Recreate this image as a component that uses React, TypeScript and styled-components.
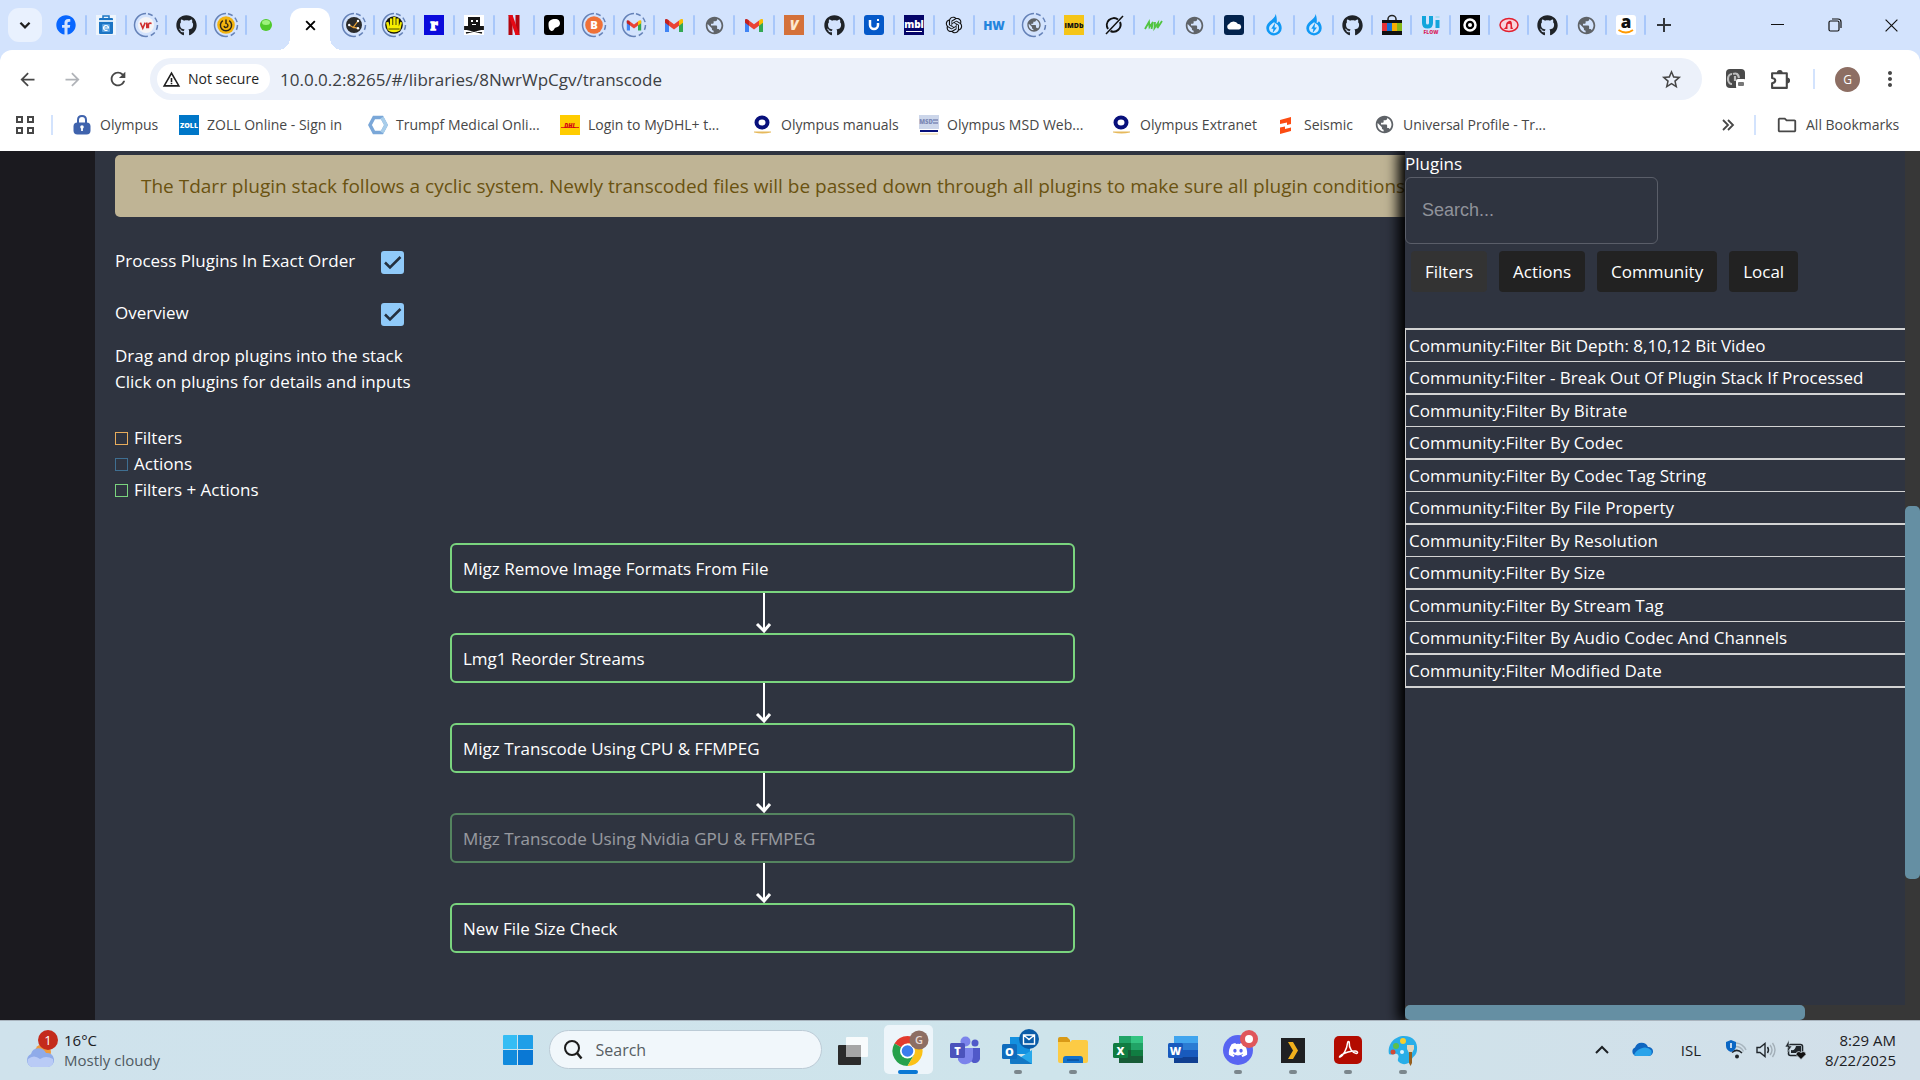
import React from "react";
import styled, { createGlobalStyle, css } from "styled-components";
import { FaFacebook, FaGithub, FaDiscord } from "react-icons/fa";
import { RiOpenaiFill } from "react-icons/ri";
import {
  MdPublic,
  MdArrowBack,
  MdArrowForward,
  MdRefresh,
  MdStarBorder,
  MdMoreVert,
  MdOutlineFolder,
  MdWarningAmber,
} from "react-icons/md";

const ui = `"Open Sans", "Noto Sans", sans-serif`;

const GlobalStyle = createGlobalStyle`
  * { box-sizing: border-box; }
  body { margin: 0; font-family: ${ui}; overflow: hidden; }
  button, input { font-family: inherit; font-size: inherit; }
  button { border: 0; padding: 0; background: none; color: inherit; cursor: pointer; }
  svg { display: block; flex: none; overflow: visible; }
  ul { list-style: none; margin: 0; padding: 0; }
  p { margin: 0; }
`;

const Screen = styled.div`
  display: flex;
  flex-direction: column;
  height: 100vh;
  background: #2f3440;
`;

/* ---------- browser chrome ---------- */

const TabStrip = styled.header`
  display: flex;
  align-items: center;
  height: 50px;
  flex: none;
  padding-left: 8px;
  background: #d3e3fd;
`;

const TabSearch = styled.button`
  display: grid;
  place-items: center;
  width: 34px;
  height: 34px;
  margin-right: 4px;
  border-radius: 11px;
  background: #e9f1fe;
  color: #1f1f1f;
`;

const Tab = styled.button<{ $narrow?: boolean; $last?: boolean }>`
  position: relative;
  display: grid;
  place-items: center;
  flex: none;
  width: ${(p) => (p.$narrow ? 39 : 40)}px;
  height: 34px;
  &::after {
    content: "";
    position: absolute;
    right: -1px;
    top: 7px;
    width: 2px;
    height: 20px;
    border-radius: 1px;
    background: ${(p) => (p.$last ? "transparent" : "#a8c7fa")};
  }
`;

const ActiveTab = styled.div`
  position: relative;
  display: grid;
  place-items: center;
  align-self: flex-end;
  width: 40px;
  height: 42px;
  margin: 0 4px;
  padding-bottom: 8px;
  border-radius: 12px 12px 0 0;
  background: #fff;
  &::before,
  &::after {
    content: "";
    position: absolute;
    bottom: 0;
    width: 12px;
    height: 12px;
  }
  &::before {
    right: 100%;
    background: radial-gradient(circle at 0 0, transparent 12px, #fff 12px);
  }
  &::after {
    left: 100%;
    background: radial-gradient(circle at 100% 0, transparent 12px, #fff 12px);
  }
`;

const NewTab = styled.button`
  display: grid;
  place-items: center;
  width: 38px;
  height: 34px;
  color: #33373d;
`;

const WindowControls = styled.div`
  display: flex;
  margin-left: auto;
`;

const WindowButton = styled.button`
  display: grid;
  place-items: center;
  width: 57px;
  height: 50px;
  color: #111;
`;

const ToolbarBack = styled.div`
  flex: none;
  background: #d3e3fd;
`;

const Toolbar = styled.div`
  display: flex;
  align-items: center;
  height: 58px;
  padding-left: 12px;
  border-radius: 12px 12px 0 0;
  background: #fff;
  color: #474747;
`;

const ToolButton = styled.button<{ $w?: number; $dim?: boolean }>`
  display: grid;
  place-items: center;
  flex: none;
  width: ${(p) => p.$w ?? 45}px;
  height: 36px;
  color: ${(p) => (p.$dim ? "#b0b3b8" : "#474747")};
`;

const AddressBar = styled.div`
  display: flex;
  align-items: center;
  flex: 1;
  height: 42px;
  margin: 0 11px 0 15px;
  padding: 0 8px 0 7px;
  border-radius: 21px;
  background: #ecf1fa;
`;

const Security = styled.button`
  display: flex;
  align-items: center;
  gap: 7px;
  flex: none;
  width: 113px;
  height: 30px;
  padding-left: 5px;
  border-radius: 15px;
  background: #fff;
  color: #1f1f1f;
  font-size: 14px;
  font-weight: 500;
  line-height: 20px;
  white-space: nowrap;
`;

const UrlInput = styled.input`
  flex: 1;
  min-width: 0;
  padding: 0 0 0 10px;
  border: 0;
  outline: 0;
  background: transparent;
  color: #3c4043;
  font-size: 17px;
`;

const ToolDivider = styled.span<{ $m?: number }>`
  flex: none;
  width: 2px;
  height: 20px;
  margin: 0 ${(p) => p.$m ?? 0}px;
  background: #d3e3fd;
`;

const Avatar = styled.button`
  display: grid;
  place-items: center;
  flex: none;
  width: 25px;
  height: 25px;
  margin-left: 10px;
  border-radius: 50%;
  background: #8d6e63;
  color: #fff;
  font-size: 12px;
`;

const Bookmarks = styled.nav`
  display: flex;
  align-items: center;
  height: 43px;
  flex: none;
  padding: 0 18px 10px 16px;
  background: #fff;
  color: #474747;
`;

const BookmarkLink = styled.a<{ $w: number }>`
  display: flex;
  align-items: center;
  gap: 8px;
  flex: none;
  width: ${(p) => p.$w}px;
  color: #474747;
  font-size: 14px;
  line-height: 20px;
  text-decoration: none;
  white-space: nowrap;
`;

const BookmarkEnd = styled.div`
  display: flex;
  align-items: center;
  gap: 20px;
  margin-left: auto;
`;

/* ---------- page ---------- */

const Page = styled.div`
  display: flex;
  flex: 1;
  min-height: 0;
  overflow: hidden;
  color: #fff;
  font-size: 17px;
  line-height: 26px;
`;

const SideRail = styled.div`
  flex: none;
  width: 95px;
  background: #1b1a1f;
`;

const Main = styled.main`
  flex: 1;
  min-width: 0;
  padding: 4px 0 0 20px;
  overflow: hidden;
`;

const Alert = styled.div`
  padding: 18px 26px;
  border-radius: 5px 0 0 5px;
  background: #bfb495;
  color: #6a5210;
  font-size: 19px;
  line-height: 26px;
  white-space: nowrap;
`;

const Options = styled.div`
  display: flex;
  flex-direction: column;
  gap: 16px;
  width: 289px;
  padding-top: 26px;
`;

const Option = styled.label`
  display: flex;
  justify-content: space-between;
  height: 36px;
  line-height: 36px;
`;

const CheckBox = styled.span`
  display: grid;
  align-self: center;
  width: 23px;
  height: 23px;
  margin-top: 3px;
  > * {
    grid-area: 1 / 1;
  }
`;

const CheckInput = styled.input`
  appearance: none;
  width: 23px;
  height: 23px;
  margin: 0;
  border: 2px solid #90caf9;
  border-radius: 3px;
  &:checked {
    background: #90caf9;
  }
  &:not(:checked) + svg {
    visibility: hidden;
  }
`;

const Hints = styled.div`
  padding-top: 12px;
`;

const Legend = styled.ul`
  padding-top: 30px;
  > li {
    display: flex;
    align-items: center;
    gap: 6px;
    height: 26px;
  }
`;

const Swatch = styled.span<{ $color: string }>`
  width: 13px;
  height: 13px;
  border: 1px solid ${(p) => p.$color};
`;

const Stack = styled.div`
  display: flex;
  flex-direction: column;
  align-items: center;
  padding: 40px 0 0 5px;
`;

const StackItem = styled.button<{ $off?: boolean }>`
  width: 625px;
  max-width: 100%;
  height: 50px;
  padding: 0 11px;
  border: 2px solid #7ad47e;
  border-radius: 6px;
  text-align: left;
  ${(p) =>
    p.$off &&
    css`
      opacity: 0.5;
    `}
`;

const Panel = styled.aside`
  position: relative;
  display: grid;
  grid-template: minmax(0, 1fr) 15px / minmax(0, 1fr) 15px;
  flex: none;
  width: 515px;
  background: #2f3440;
  box-shadow: -5px 0 12px 2px #000;
`;

const PanelBody = styled.div`
  overflow: hidden;
`;

const PanelTitle = styled.label`
  display: block;
`;

const PluginSearch = styled.input`
  display: block;
  width: 253px;
  height: 67px;
  padding: 0 16px;
  border: 1px solid #5a5e69;
  border-radius: 6px;
  outline: 0;
  background: transparent;
  color: #fff;
  font-family: "Liberation Sans", Arial, sans-serif;
  font-size: 18px;
  &::placeholder {
    color: #8f929a;
    opacity: 1;
  }
`;

const FilterBar = styled.div`
  display: flex;
  gap: 12px;
  padding: 7px 0 36px 6px;
`;

const FilterButton = styled.button<{ $on?: boolean }>`
  height: 41px;
  padding: 0 14px;
  border-radius: 4px;
  background: ${(p) => (p.$on ? "#333333" : "#222222")};
  color: #fff;
`;

const PluginList = styled.ul`
  border-bottom: 2px solid #d3d3d3;
  border-left: 1px solid #d3d3d3;
  > li {
    height: 32px;
    padding-left: 3px;
    border-top: 1px solid #d3d3d3;
    line-height: 32px;
    white-space: nowrap;
  }
  > li:nth-child(odd) {
    height: 33px;
    border-top-width: 2px;
  }
`;

const Track = styled.div<{ $dir: "row" | "column" }>`
  display: flex;
  flex-direction: ${(p) => p.$dir};
  background: #373737;
`;

const Space = styled.span<{ $part: number }>`
  flex: ${(p) => p.$part} 0 0;
`;

const Thumb = styled.span<{ $part: number }>`
  flex: ${(p) => p.$part} 0 0;
  border-radius: 5px;
  background: #658fa3;
`;

const Corner = styled.div`
  background: #373737;
`;

/* ---------- taskbar ---------- */

const Taskbar = styled.footer`
  position: relative;
  display: grid;
  grid-template-columns: 1fr auto 1fr;
  align-items: center;
  flex: none;
  height: 60px;
  padding-bottom: 2px;
  border-top: 1px solid #a9b4be;
  background: linear-gradient(90deg, #cfe2ec, #cee4eb 55%, #d2dfe9);
  color: #1c2024;
  font-size: 15px;
  line-height: 20px;
`;

const Weather = styled.button`
  display: flex;
  align-items: center;
  gap: 8px;
  padding-left: 24px;
  justify-self: start;
  text-align: left;
`;

const WeatherNote = styled.span`
  display: block;
  color: #4f5a62;
`;

const AppRow = styled.div`
  display: flex;
  align-items: center;
  padding-left: 13px;
`;

const StartButton = styled.button`
  margin-right: 16px;
`;

const TaskSearch = styled.label`
  display: flex;
  align-items: center;
  gap: 12px;
  width: 273px;
  height: 39px;
  margin-right: 4px;
  padding-left: 14px;
  border: 1px solid #bccbd6;
  border-radius: 20px;
  background: #f1f7fb;
`;

const TaskSearchInput = styled.input`
  width: 200px;
  border: 0;
  outline: 0;
  background: transparent;
  font-size: 16px;
  &::placeholder {
    color: #575d63;
    opacity: 1;
  }
`;

const AppButton = styled.button<{ $active?: boolean; $running?: boolean }>`
  position: relative;
  display: grid;
  place-items: center;
  width: 49px;
  height: 49px;
  margin: 0 3px;
  border-radius: 5px;
  background: ${(p) => (p.$active ? "#edf5fa" : "transparent")};
  &::after {
    content: "";
    position: absolute;
    bottom: 0;
    width: ${(p) => (p.$active ? 20 : 8)}px;
    height: 4px;
    border-radius: 2px;
    background: ${(p) => (p.$active ? "#0a78d4" : p.$running ? "#7b878d" : "transparent")};
  }
`;

const Tray = styled.div`
  display: flex;
  align-items: center;
  justify-self: end;
  gap: 9px;
  padding-right: 24px;
`;

const HiddenIcons = styled.button`
  margin-right: 13px;
`;

const Language = styled.button`
  margin: 0 16px 0 19px;
`;

const Clock = styled.div`
  min-width: 80px;
  text-align: right;
`;

/* ---------- drawings ---------- */

const letter = { fontFamily: "Open Sans, sans-serif", fontWeight: 800, textAnchor: "middle" as const };

const Chevron = ({ up, size = 14 }: { up?: boolean; size?: number }) => (
  <svg width={size} height={size} viewBox="0 0 14 14" fill="none" stroke="currentColor" strokeWidth="2">
    <path d={up ? "M1 10l6-6 6 6" : "M3 5l4 4 4-4"} />
  </svg>
);

const Cross = ({ size, w }: { size: number; w: number }) => (
  <svg width={size} height={size} viewBox="0 0 14 14" fill="none" stroke="currentColor" strokeWidth={w}>
    <path d="M1.5 1.5l11 11M12.5 1.5l-11 11" />
  </svg>
);

const Art = ({ children, size = 20 }: { children: React.ReactNode; size?: number }) => (
  <svg width={size} height={size} viewBox="0 0 20 20">
    {children}
  </svg>
);

const Ringed = ({ children }: { children: React.ReactNode }) => (
  <svg width="26" height="26" viewBox="0 0 26 26">
    <path d="M13 1.5a11.5 11.5 0 0 0 0 23" fill="none" stroke="#6582b8" strokeWidth="1.5" />
    <path
      d="M13 1.5a11.5 11.5 0 0 1 0 23"
      fill="none"
      stroke="#6582b8"
      strokeWidth="1.5"
      strokeDasharray="5 3"
      strokeDashoffset="-2"
    />
    <g transform="translate(5 5) scale(.8)">{children}</g>
  </svg>
);

const Globe = () => <MdPublic size={21} color="#5f6368" />;

const gmail = (
  <>
    <path d="M1 4.500V17h4V9z" fill="#4285f4" />
    <path d="M19 4.500V17h-4V9z" fill="#34a853" />
    <path d="M5 5.500v5.200l5 3.800 5-3.800V5.500l-5 3.800z" fill="#ea4335" />
    <path d="M1 5.200v2.500l4 3V5.500l-.8-.7C2.800 3.700 1 4 1 5.200z" fill="#c5221f" />
    <path d="M19 5.200v2.500l-4 3V5.500l.8-.7c1.400-1.100 3.200-.8 3.200.4z" fill="#fbbc04" />
  </>
);

const Flame = () => (
  <Art size={22}>
    <path
      d="M11.500 0C11 5 3 7 3 13a7 6.500 0 0 0 14 0c0-3-1.200-5-2.600-6.500-.6 1-1.200 1.500-2 1.800.5-3-.1-6.300-.9-8.300z"
      fill="#1199f5"
    />
    <path d="M10 7.500c-2.500 1.800-4.500 3-4.500 5.500a4.500 4.500 0 0 0 9 0c0-1.500-.6-2.400-1.300-3.300z" fill="#d3eaff" />
    <path d="M11 8l-3.500 5.500h2l-.8 4 4-5.200h-2.200z" fill="#1199f5" />
  </Art>
);

const GithubIcon = () => <FaGithub size={21} color="#1f2328" />;

const leftTabs: [string, React.ReactNode][] = [
  ["Facebook", <FaFacebook size={20} color="#0866ff" />],
  [
    "Shop",
    <Art>
      <rect width="20" height="20" fill="#eef5fc" />
      <path d="M7 4V1h6v3" fill="none" stroke="#1c75c4" strokeWidth="1.500" />
      <rect x="3" y="3" width="14" height="16" rx="1" fill="#1c75c4" />
      <rect x="3" y="5" width="14" height="2" fill="#cfe4f7" />
      <rect x="6" y="9" width="8" height="8" rx="1" fill="#5aa3e2" />
      <path d="M7.500 13h5a2.500 2.500 0 1 0-1 2" fill="none" stroke="#fff" strokeWidth="1.200" />
    </Art>,
  ],
  [
    "Vir",
    <Ringed>
      <circle cx="10" cy="10" r="10" fill="#f4f4f6" />
      <path d="M3 7l3 7 3-7M11 7v7M13 14V9q1-2 4-1" fill="none" stroke="#cf2e2e" strokeWidth="2" />
    </Ringed>,
  ],
  ["GitHub", <GithubIcon />],
  [
    "Power",
    <Ringed>
      <circle cx="10" cy="10" r="11" fill="#f3b40f" />
      <path d="M6 4.500a7 7 0 1 0 8 0M10 3v5a2.500 2.500 0 1 1-2.500 3" fill="none" stroke="#2c2617" strokeWidth="1.800" />
    </Ringed>,
  ],
  [
    "Status",
    <Art>
      <circle cx="10" cy="10" r="6" fill="#4fc92b" />
      <ellipse cx="10" cy="7.500" rx="4" ry="2.500" fill="#9df27c" />
    </Art>,
  ],
];

const midTabs: [string, React.ReactNode][] = [
  [
    "Grapher",
    <Ringed>
      <circle cx="10" cy="10" r="10" fill="#2b2b2b" />
      <path d="M4 10l5 3 6-8M9 13l6 1" fill="none" stroke="#e8a33a" strokeWidth="1.500" />
      <circle cx="15" cy="5" r="1.500" fill="#fff" />
      <circle cx="4" cy="10" r="1.500" fill="#fff" />
      <circle cx="15" cy="14" r="1.500" fill="#fff" />
    </Ringed>,
  ],
  [
    "Hand",
    <Ringed>
      <circle cx="10" cy="10" r="11" fill="#17170a" />
      <path d="M0 7l3-1 2 6V2h3v8h1V0h3v10h1V2h3v10l2-6 2 1-2 9q-2 3-8 3t-8-3z" fill="#f7ee00" />
      <path d="M3 15h14" stroke="#17170a" />
    </Ringed>,
  ],
  [
    "R",
    <Art>
      <rect width="20" height="20" fill="#0b0bdc" />
      <text x="10" y="15" fontSize="16" fontWeight="900" fill="#fff" stroke="#fff" strokeWidth="1.500" textAnchor="middle" fontFamily="Liberation Serif, serif">
        r
      </text>
    </Art>,
  ],
  [
    "Pirate",
    <Art>
      <rect width="20" height="20" fill="#fff" />
      <path d="M4 2h12v9H4z" fill="#161616" />
      <path d="M7 5h2v2H7zM12 5h2v2h-2zM8 9h4v1H8z" fill="#fff" />
      <path d="M1 12h18v2H1zM2 18l16-4M18 18L2 14" stroke="#161616" strokeWidth="1.800" />
    </Art>,
  ],
  [
    "Netflix",
    <Art>
      <path d="M4.500 0h4v20h-4zM11.500 0h4v20h-4z" fill="#b1060f" />
      <path d="M4.500 0h4l7 20h-4z" fill="#e50914" />
    </Art>,
  ],
  [
    "Patreon",
    <Art>
      <rect width="20" height="20" rx="3" fill="#000" />
      <path d="M4.500 9c0-3.500 3-5 6.500-5s5 2 5 4.500-2 3.500-4 4-2 3.500-4 3.500-3.500-2-3.500-7z" fill="#fff" />
    </Art>,
  ],
  [
    "Bitwise",
    <Ringed>
      <circle cx="10" cy="10" r="11" fill="#ef7137" />
      <text x="10" y="15" fontSize="14" fill="#fff" {...letter}>
        B
      </text>
    </Ringed>,
  ],
  ["Gmail", <Ringed>{gmail}</Ringed>],
  ["Gmail", <Art>{gmail}</Art>],
  ["Page", <Globe />],
  ["Gmail", <Art>{gmail}</Art>],
  [
    "V",
    <Art>
      <rect width="20" height="20" fill="#d4713a" />
      <text x="10" y="15" fontSize="14" fill="#fde8cf" fontStyle="italic" {...letter}>
        V
      </text>
    </Art>,
  ],
  ["GitHub", <GithubIcon />],
  [
    "Unifi",
    <Art>
      <rect width="20" height="20" rx="3" fill="#0559c9" />
      <path d="M6 5v5a4 4 0 0 0 8 0V8" fill="none" stroke="#fff" strokeWidth="2.500" />
      <path d="M13 4h2v2h-2z" fill="#fff" />
    </Art>,
  ],
  [
    "mbl",
    <Art>
      <rect width="20" height="20" fill="#050569" />
      <text x="10" y="13" fontSize="10" fill="#fff" {...letter}>
        mbl
      </text>
      <path d="M2 16.500h16" stroke="#fff" />
    </Art>,
  ],
  ["OpenAI", <RiOpenaiFill size={20} color="#111" />],
  [
    "HW",
    <Art>
      <text x="10" y="15" fontSize="12" fill="#2385dd" {...letter}>
        HW
      </text>
    </Art>,
  ],
  [
    "Page",
    <Ringed>
      <MdPublic size={20} color="#5f6368" />
    </Ringed>,
  ],
  [
    "IMDb",
    <Art>
      <rect width="20" height="20" fill="#f5c518" />
      <text x="10" y="13" fontSize="7" fill="#111" {...letter}>
        IMDb
      </text>
    </Art>,
  ],
  [
    "Grok",
    <Art>
      <path d="M14 4.500A7 7 0 0 0 4 14M16 7a7 7 0 0 1-9.500 9" fill="none" stroke="#111" strokeWidth="2" />
      <path d="M19 1L2 19" stroke="#111" strokeWidth="1.500" />
    </Art>,
  ],
  [
    "MW",
    <Art>
      <path
        d="M1 14L5 7l.5 5L9 7l-1.500 7M11 7l-.5 6L14 8l-.5 5L18 6"
        fill="none"
        stroke="#52c441"
        strokeWidth="1.800"
      />
    </Art>,
  ],
  ["Page", <Globe />],
  [
    "Cloud",
    <Art>
      <rect width="20" height="20" rx="3" fill="#03234d" />
      <path d="M5 14.500a3 3 0 0 1 0-5.500 5 4.500 0 0 1 9 0 2.800 2.800 0 0 1 1 5.500z" fill="#fff" />
    </Art>,
  ],
  ["Flame", <Flame />],
];

const rightTabs: [string, React.ReactNode][] = [
  ["Flame", <Flame />],
  ["GitHub", <GithubIcon />],
  [
    "Store",
    <Art>
      <path d="M6 6V4a4 3.500 0 0 1 8 0v2" fill="none" stroke="#222" strokeWidth="1.500" />
      <path d="M0 5h20v15H0z" fill="#111" />
      <path d="M0 8h5v8H0z" fill="#e53238" />
      <path d="M5 8h5v8H5z" fill="#1470d8" />
      <path d="M10 8h5v8h-5z" fill="#f5af02" />
      <path d="M15 8h5v8h-5z" fill="#86b817" />
    </Art>,
  ],
  [
    "UiFlow",
    <Art>
      <path d="M3 1v7q0 3.500 3.500 3.500T10 8V1M16.500 5v8" fill="none" stroke="#12a5dc" strokeWidth="4" />
      <rect x="14.500" y="1" width="4" height="2" fill="#a9dcf2" />
      <text x="10" y="18.500" fontSize="5" fill="#d81e5b" {...letter}>
        FLOW
      </text>
    </Art>,
  ],
  [
    "Target",
    <Art>
      <rect width="20" height="20" fill="#000" />
      <circle cx="10" cy="10" r="5.500" fill="none" stroke="#fff" strokeWidth="2.500" />
      <circle cx="10" cy="10" r="2" fill="#fff" />
    </Art>,
  ],
  [
    "Red",
    <Art>
      <ellipse cx="10" cy="10" rx="9" ry="6.500" fill="#f8d5dc" stroke="#e21f2e" strokeWidth="1.500" />
      <path d="M4 14q3-1 3-4t3-4 3 4 3 4h-4.500V9.500q-1.500-1.500-3 0V14z" fill="#e21f2e" />
    </Art>,
  ],
  ["GitHub", <GithubIcon />],
  ["Page", <Globe />],
  [
    "Amazon",
    <Art>
      <rect width="20" height="20" rx="3" fill="#fff" />
      <text x="10" y="13" fontSize="17" fill="#111" {...letter}>
        a
      </text>
      <path d="M2.500 15q7.500 5 14.500 0" fill="none" stroke="#ff9900" strokeWidth="1.800" />
    </Art>,
  ],
];

const OlympusO = () => (
  <Art>
    <ellipse cx="9" cy="7.500" rx="5.500" ry="5" fill="none" stroke="#08107b" strokeWidth="4" />
    <path d="M1 16.500h17v1q-8.500 2-17 0z" fill="#e6b95c" />
  </Art>
);

const bookmarks: [string, number, React.ReactNode][] = [
  [
    "Olympus",
    107,
    <Art>
      <path d="M6 9V5q0-4 4-4t4 4v4" fill="none" stroke="#3f63ad" strokeWidth="2" />
      <rect x="1.500" y="7.500" width="17" height="12" rx="4" fill="#3f63ad" />
      <circle cx="10" cy="12" r="1.800" fill="#fff" />
      <path d="M10 12v4" stroke="#fff" strokeWidth="1.800" />
    </Art>,
  ],
  [
    "ZOLL Online - Sign in",
    189,
    <Art>
      <rect width="20" height="20" fill="#0077c8" />
      <text x="10" y="12.500" fontSize="7" fill="#fff" {...letter}>
        ZOLL
      </text>
    </Art>,
  ],
  [
    "Trumpf Medical Onli...",
    192,
    <Art>
      <path d="M6 2.500h8l4 7.500-4 7.500H6L2 10z" fill="none" stroke="#7aa7d8" strokeWidth="3.500" />
      <path d="M14 2.500l4 7.500-4 7.500" fill="none" stroke="#a8cdea" strokeWidth="3.500" />
    </Art>,
  ],
  [
    "Login to MyDHL+ t...",
    193,
    <Art>
      <rect width="20" height="20" fill="#ffcc00" />
      <text x="10" y="12.500" fontSize="6" fill="#d40511" fontStyle="italic" {...letter}>
        DHL
      </text>
      <path d="M1 12.500h18" stroke="#d40511" strokeWidth=".8" />
    </Art>,
  ],
  ["Olympus manuals", 166, <OlympusO />],
  [
    "Olympus MSD Web...",
    193,
    <Art>
      <rect width="20" height="14" fill="#ccd6ea" />
      <text x="7" y="9" fontSize="6" fill="#7c89b5" {...letter}>
        MSD
      </text>
      <path d="M14 5h5M14 8h5" stroke="#56639c" />
      <path d="M1 16h18" stroke="#08107b" strokeWidth="2" />
      <path d="M1 19h18" stroke="#e8cf94" />
    </Art>,
  ],
  ["Olympus Extranet", 164, <OlympusO />],
  [
    "Seismic",
    98,
    <Art>
      <path d="M4 5l11-3v7l-4 1V7.500L4 9zM15 9v7L4 19v-6.500l5-1V14l6-1.500z" fill="#fc4c12" />
    </Art>,
  ],
  ["Universal Profile - Tr...", 190, <Globe />],
];

const options = ["Process Plugins In Exact Order", "Overview"];

const legend = [
  ["#e8ac5c", "Filters"],
  ["#3f6f92", "Actions"],
  ["#7ad47e", "Filters + Actions"],
];

const stack = [
  "Migz Remove Image Formats From File",
  "Lmg1 Reorder Streams",
  "Migz Transcode Using CPU & FFMPEG",
  "Migz Transcode Using Nvidia GPU & FFMPEG",
  "New File Size Check",
];

const plugins = [
  "Bit Depth: 8,10,12 Bit Video",
  "- Break Out Of Plugin Stack If Processed",
  "By Bitrate",
  "By Codec",
  "By Codec Tag String",
  "By File Property",
  "By Resolution",
  "By Size",
  "By Stream Tag",
  "By Audio Codec And Channels",
  "Modified Date",
];

const TaskArt = ({ children }: { children: React.ReactNode }) => (
  <svg width="40" height="44" viewBox="0 0 40 44">
    {children}
  </svg>
);

const OfficeBadge = ({ x, y, color, text }: { x: number; y: number; color: string; text: string }) => (
  <>
    <rect x={x} y={y} width="15" height="15" rx="1.500" fill={color} />
    <text x={x + 7.5} y={y + 11.5} fontSize="11" fill="#fff" {...letter}>
      {text}
    </text>
  </>
);

const apps: { name: string; active?: boolean; running?: boolean; art: React.ReactNode }[] = [
  {
    name: "Task view",
    art: (
      <>
        <rect x="5" y="17" width="23" height="20" rx="1" fill="#2b2b2b" />
        <rect x="13" y="9" width="22" height="20" rx="1" fill="#fff" opacity=".85" />
        <path d="M13 17h15v12H13z" fill="#a6a6a6" />
      </>
    ),
  },
  {
    name: "Chrome",
    active: true,
    art: (
      <>
        <path d="M19.500 23L6.500 15.500A15 15 0 0 1 32.500 15.500H19.500z" fill="#e33b2e" />
        <path d="M19.500 23L6.500 15.500a15 15 0 0 0 13 22.500l6.500-11z" fill="#26a14b" />
        <path d="M19.500 23l6.500 4-6.500 11a15 15 0 0 0 13-22.500h-13z" fill="#fbc116" />
        <circle cx="19.500" cy="23" r="7.500" fill="#fff" />
        <circle cx="19.500" cy="23" r="5.800" fill="#3b7ded" />
        <circle cx="31" cy="12" r="9.500" fill="#8d6e63" />
        <text x="31" y="16" fontSize="11" fill="#e6dad6" fontFamily="Open Sans, sans-serif" fontWeight="600" textAnchor="middle">
          G
        </text>
      </>
    ),
  },
  {
    name: "Teams",
    art: (
      <>
        <circle cx="32" cy="15" r="3.500" fill="#5059c9" />
        <path d="M26 20h11v9a5 5 0 0 1-10 2z" fill="#5059c9" />
        <circle cx="22.500" cy="13.500" r="5" fill="#7b83eb" />
        <path d="M15 20h15v9a8 8 0 0 1-15 3z" fill="#7b83eb" />
        <OfficeBadge x={7} y={15} color="#4b53bc" text="T" />
      </>
    ),
  },
  {
    name: "Outlook",
    running: true,
    art: (
      <>
        <rect x="12" y="9" width="20" height="17" fill="#1490df" />
        <path d="M12 22l11 7 11-7v14H12z" fill="#28a8ea" />
        <path d="M12 22l22 14H14q-2 0-2-2z" fill="#0a64b5" opacity=".7" />
        <OfficeBadge x={4} y={16} color="#0f6cbd" text="O" />
        <circle cx="31" cy="11" r="10" fill="#0a5ca8" />
        <path d="M25.500 7h11v9h-11zl5.500 4.500L36.500 7" fill="none" stroke="#fff" strokeWidth="1.400" />
      </>
    ),
  },
  {
    name: "File Explorer",
    running: true,
    art: (
      <>
        <path d="M5 11q0-2 2-2h7l3 3v4H5z" fill="#d99a17" />
        <path d="M5 14l12 0 2-2h14q2 0 2 2v19q0 2-2 2H7q-2 0-2-2z" fill="#fccb45" />
        <path d="M10 35v-4q0-3 3-3h14q3 0 3 3v4z" fill="#1272cc" />
        <path d="M14 32h12" stroke="#0a4f9b" strokeWidth="1.500" />
      </>
    ),
  },
  {
    name: "Excel",
    art: (
      <>
        <path d="M11 8h12v14H11z" fill="#21a366" />
        <path d="M23 8h12v7H23z" fill="#33c481" />
        <path d="M11 15h12v7H11z" fill="#107c41" />
        <path d="M23 15h12v7H23z" fill="#21a366" />
        <path d="M11 22h24v13H11z" fill="#185c37" />
        <path d="M23 22h12v6H23z" fill="#107c41" />
        <OfficeBadge x={5} y={15} color="#107c41" text="X" />
      </>
    ),
  },
  {
    name: "Word",
    art: (
      <>
        <path d="M11 8h24v7H11z" fill="#41a5ee" />
        <path d="M11 15h24v7H11z" fill="#2b7cd3" />
        <path d="M11 22h24v7H11z" fill="#185abd" />
        <path d="M11 29h24v6H11z" fill="#103f91" />
        <OfficeBadge x={5} y={15} color="#185abd" text="W" />
      </>
    ),
  },
  {
    name: "Discord",
    running: true,
    art: (
      <>
        <circle cx="20" cy="22" r="15" fill="#5865f2" />
        <g transform="translate(10 12)">
          <FaDiscord size={20} color="#fff" />
        </g>
        <circle cx="31" cy="11" r="9" fill="#e0565b" />
        <circle cx="31" cy="11" r="4" fill="#fff" />
      </>
    ),
  },
  {
    name: "Plex",
    running: true,
    art: (
      <>
        <rect x="8" y="10" width="24" height="25" fill="#1f2022" />
        <path d="M15 14h5l5 8.500-5 8.500h-5l5-8.500z" fill="#f0b01c" />
      </>
    ),
  },
  {
    name: "Acrobat",
    running: true,
    art: (
      <>
        <rect x="6" y="8" width="28" height="28" rx="5" fill="#b30b00" />
        <path
          d="M12 29c3-1 7-8 7.500-14 .2-2 2-2 1.800 0-.5 5 3 10 7 10.500 2 0 1.500-2.500-1-2.500-5 0-10 1.500-14 4-1.500 1-2.500 2.500-1.300 2z"
          fill="none"
          stroke="#fff"
          strokeWidth="1.500"
        />
      </>
    ),
  },
  {
    name: "Paint",
    running: true,
    art: (
      <>
        <path
          d="M6 26C4 16 12 8 21 8s14 6 13 14c-.6 6-4 6-5 9-2 5-9 7-13 3-3-2 1-5-1-7-2-3-6 1-9-1z"
          fill="#29aee8"
        />
        <circle cx="13" cy="18" r="3" fill="#5fbf4a" />
        <circle cx="20" cy="13" r="3" fill="#f7cf2e" />
        <circle cx="10" cy="24" r="2.500" fill="#d24a36" />
        <circle cx="19" cy="24" r="2" fill="#d8f1fc" />
        <path d="M24 17h7v4l-2 4h-3l-2-4z" fill="#e3d6bd" />
        <path d="M26 24h3v11l-1.500 3-1.500-3z" fill="#96601f" />
      </>
    ),
  },
];

export default function App() {
  return (
    <Screen>
      <GlobalStyle />

      <TabStrip>
        <TabSearch aria-label="Search tabs">
          <Chevron size={16} />
        </TabSearch>
        {leftTabs.map(([name, icon], i) => (
          <Tab key={i} aria-label={name} $last={i === leftTabs.length - 1}>
            {icon}
          </Tab>
        ))}
        <ActiveTab>
          <button aria-label="Close tab">
            <Cross size={11} w={2.4} />
          </button>
        </ActiveTab>
        {midTabs.map(([name, icon], i) => (
          <Tab key={i} aria-label={name}>
            {icon}
          </Tab>
        ))}
        {rightTabs.map(([name, icon], i) => (
          <Tab key={i} aria-label={name} $narrow>
            {icon}
          </Tab>
        ))}
        <NewTab aria-label="New tab">
          <svg width="14" height="14" viewBox="0 0 14 14" stroke="currentColor" strokeWidth="2">
            <path d="M7 0v14M0 7h14" />
          </svg>
        </NewTab>
        <WindowControls>
          <WindowButton aria-label="Minimize">
            <svg width="13" height="14" viewBox="0 0 13 14" stroke="currentColor">
              <path d="M0 6.500h13" />
            </svg>
          </WindowButton>
          <WindowButton aria-label="Restore">
            <svg width="14" height="14" viewBox="0 0 14 14" fill="none" stroke="currentColor" strokeWidth="1.200">
              <rect x="1" y="3" width="10" height="10" rx="1.500" />
              <path d="M4 1h6q3 0 3 3v6" />
            </svg>
          </WindowButton>
          <WindowButton aria-label="Close">
            <Cross size={15} w={1.1} />
          </WindowButton>
        </WindowControls>
      </TabStrip>

      <ToolbarBack>
        <Toolbar>
          <ToolButton aria-label="Back" $w={31}>
            <MdArrowBack size={21} />
          </ToolButton>
          <ToolButton aria-label="Forward" $w={58} $dim>
            <MdArrowForward size={21} />
          </ToolButton>
          <ToolButton aria-label="Reload" $w={34}>
            <MdRefresh size={22} />
          </ToolButton>
          <AddressBar>
            <Security>
              <MdWarningAmber size={19} />
              Not secure
            </Security>
            <UrlInput aria-label="Address" defaultValue="10.0.0.2:8265/#/libraries/8NwrWpCgv/transcode" />
            <ToolButton aria-label="Bookmark this page">
              <MdStarBorder size={23} />
            </ToolButton>
          </AddressBar>
          <ToolButton aria-label="Downloader extension">
            <Art>
              <rect width="19" height="19" rx="4" fill="#4a4a4a" />
              <path d="M6 15a4 5 0 1 1 0-10M7 5q5-2 6 4M9 7v5" fill="none" stroke="#bdbdbd" strokeWidth="2.200" />
              <rect x="10" y="10" width="10" height="10" rx="2" fill="#fff" />
              <rect x="12" y="13" width="6" height="4" rx="1" fill="#777" />
            </Art>
          </ToolButton>
          <ToolButton aria-label="Extensions">
            <Art size={21}>
              <path
                d="M2 4h14v14H2v-4.500q3-.5 3-2.500T2 8.500z"
                fill="none"
                stroke="#474747"
                strokeWidth="2"
                strokeLinejoin="round"
              />
              <path d="M7 4a2.300 2.600 0 0 1 4.600 0zM16 8.700a2.600 2.300 0 0 1 0 4.600z" fill="#474747" stroke="#474747" />
            </Art>
          </ToolButton>
          <ToolDivider $m={10} />
          <Avatar>G</Avatar>
          <ToolButton aria-label="Menu" $w={60}>
            <MdMoreVert size={24} />
          </ToolButton>
        </Toolbar>
      </ToolbarBack>

      <Bookmarks>
        <ToolButton aria-label="Apps" $w={16}>
          <svg width="18" height="18" viewBox="0 0 18 18" fill="none" stroke="#474747" strokeWidth="2">
            <path d="M1 1h5v5H1zM12 1h5v5h-5zM1 12h5v5H1zM12 12h5v5h-5z" />
          </svg>
        </ToolButton>
        <ToolDivider $m={19} />
        {bookmarks.map(([name, w, icon]) => (
          <BookmarkLink key={name} href="#" $w={w}>
            {icon}
            {name}
          </BookmarkLink>
        ))}
        <BookmarkEnd>
          <button aria-label="More bookmarks">
            <svg width="12" height="12" viewBox="0 0 12 12" fill="none" stroke="#474747" strokeWidth="1.800">
              <path d="M1 1l5 5-5 5M6 1l5 5-5 5" />
            </svg>
          </button>
          <ToolDivider />
          <BookmarkLink href="#" $w={126}>
            <MdOutlineFolder size={22} />
            All Bookmarks
          </BookmarkLink>
        </BookmarkEnd>
      </Bookmarks>

      <Page>
        <SideRail />
        <Main>
          <Alert>
            The Tdarr plugin stack follows a cyclic system. Newly transcoded files will be passed down through all plugins to make
            sure all plugin conditions
          </Alert>
          <Options>
            {options.map((name) => (
              <Option key={name}>
                {name}
                <CheckBox>
                  <CheckInput type="checkbox" defaultChecked />
                  <svg width="23" height="23" viewBox="0 0 23 23" fill="none" stroke="#23303f" strokeWidth="2.500">
                    <path d="M4 11.500l5 5L19.500 6" />
                  </svg>
                </CheckBox>
              </Option>
            ))}
          </Options>
          <Hints>
            <p>Drag and drop plugins into the stack</p>
            <p>Click on plugins for details and inputs</p>
          </Hints>
          <Legend>
            {legend.map(([color, name]) => (
              <li key={name}>
                <Swatch $color={color} />
                {name}
              </li>
            ))}
          </Legend>
          <Stack>
            {stack.map((name, i) => (
              <React.Fragment key={name}>
                {i > 0 && (
                  <svg width="17" height="40" viewBox="0 0 17 40" fill="none" stroke="#fff">
                    <path d="M10 0v38" strokeWidth="2" />
                    <path d="M3 31l7 7 6-7" strokeWidth="3" />
                  </svg>
                )}
                <StackItem $off={i === 3}>{name}</StackItem>
              </React.Fragment>
            ))}
          </Stack>
        </Main>

        <Panel>
          <PanelBody>
            <PanelTitle htmlFor="plugin-search">Plugins</PanelTitle>
            <PluginSearch id="plugin-search" placeholder="Search..." />
            <FilterBar>
              <FilterButton $on>Filters</FilterButton>
              <FilterButton>Actions</FilterButton>
              <FilterButton>Community</FilterButton>
              <FilterButton>Local</FilterButton>
            </FilterBar>
            <PluginList>
              {plugins.map((name) => (
                <li key={name}>Community:Filter {name}</li>
              ))}
            </PluginList>
          </PanelBody>
          <Track $dir="column">
            <Space $part={355} />
            <Thumb $part={373} />
            <Space $part={126} />
          </Track>
          <Track $dir="row">
            <Thumb $part={400} />
            <Space $part={100} />
          </Track>
          <Corner />
        </Panel>
      </Page>

      <Taskbar>
        <Weather>
          <svg width="32" height="42" viewBox="0 0 32 42">
            <circle cx="19" cy="23" r="8" fill="#ef9a3c" />
            <path d="M8 38a7 7 0 0 1-1-13 8 8 0 0 1 15-1 7 7 0 0 1 2 14z" fill="#8fabe9" />
            <path d="M8 38a6 6 0 0 1-4-8q6-5 12 0 6-4 13 0a6 6 0 0 1-5 8z" fill="#b9cbf6" />
            <circle cx="24" cy="11" r="10" fill="#c42b1c" />
            <text x="24" y="16" fontSize="13" fill="#fff" textAnchor="middle" fontFamily="Open Sans, sans-serif">
              1
            </text>
          </svg>
          <span>
            16°C
            <WeatherNote>Mostly cloudy</WeatherNote>
          </span>
        </Weather>

        <AppRow>
          <StartButton aria-label="Start">
            <svg width="30" height="30" viewBox="0 0 30 30">
              <path d="M0 1q0-1 1-1h13v14H0z" fill="#35bdf4" />
              <path d="M15 0h14q1 0 1 1v13H15z" fill="#1f9fe8" />
              <path d="M0 15h14v15H1q-1 0-1-1z" fill="#118bdd" />
              <path d="M15 15h15v14q0 1-1 1H15z" fill="#0a78d4" />
            </svg>
          </StartButton>
          <TaskSearch>
            <svg width="18" height="20" viewBox="0 0 18 20" fill="none" stroke="#1c1c1c" strokeWidth="2">
              <circle cx="8" cy="8" r="7" />
              <path d="M13 13l4.500 5.500" strokeWidth="2.500" />
            </svg>
            <TaskSearchInput aria-label="Search" placeholder="Search" />
          </TaskSearch>
          {apps.map((app) => (
            <AppButton key={app.name} aria-label={app.name} $active={app.active} $running={app.running}>
              <TaskArt>{app.art}</TaskArt>
            </AppButton>
          ))}
        </AppRow>

        <Tray>
          <HiddenIcons aria-label="Hidden icons">
            <Chevron up />
          </HiddenIcons>
          <svg width="22" height="15" viewBox="0 0 22 15">
            <path d="M5 14a4.500 4.500 0 0 1-1-8.500A7 7 0 0 1 17 5a4.500 4.500 0 0 1 1 9z" fill="#0f66c0" />
            <path d="M3 13q2-5 7-6.500Q16 4 20.500 8.500 21.500 14 17 14H5z" fill="#29a3ea" />
          </svg>
          <Language>ISL</Language>
          <svg width="21" height="20" viewBox="0 0 21 20" fill="none">
            <path d="M10 3a12 12 0 0 1 10 7M9 6.500a9 9 0 0 1 8.500 5" stroke="#a9b6bf" strokeWidth="1.500" />
            <path d="M6 12.500q5-4.500 10 .5" stroke="#20262b" strokeWidth="1.500" />
            <circle cx="11" cy="16.500" r="2" fill="#20262b" />
            <path d="M0 2l5-2 5 2v4q0 4-5 6-5-2-5-6z" fill="#0a66c4" />
            <path d="M5 3v5" stroke="#fff" strokeWidth="1.500" />
          </svg>
          <svg width="20" height="18" viewBox="0 0 20 18" fill="none" stroke="#20262b" strokeWidth="1.400">
            <path d="M1 6.500h3l5-4v13l-5-4H1z" />
            <path d="M11.500 6q2 3 0 6" />
            <path d="M14 4q4 5 0 10M16.500 2q5 7 0 14" stroke="#a3afb8" />
          </svg>
          <svg width="22" height="20" viewBox="0 0 22 20">
            <rect x="3.500" y="4.500" width="14" height="11" rx="2" fill="none" stroke="#20262b" strokeWidth="1.600" />
            <path d="M6 13V10q4 1 5-4h5v7z" fill="#20262b" />
            <path d="M4 0L0 7h3l-1 6 5-7H4z" fill="#20262b" stroke="#d2e0e9" strokeWidth=".6" />
            <path d="M16 19.500l-5-5q0-3 3-3l2 1 2-1q3 0 3 3z" fill="#111" stroke="#d2e0e9" strokeWidth=".8" />
          </svg>
          <Clock>
            8:29 AM
            <br />
            8/22/2025
          </Clock>
        </Tray>
      </Taskbar>
    </Screen>
  );
}
